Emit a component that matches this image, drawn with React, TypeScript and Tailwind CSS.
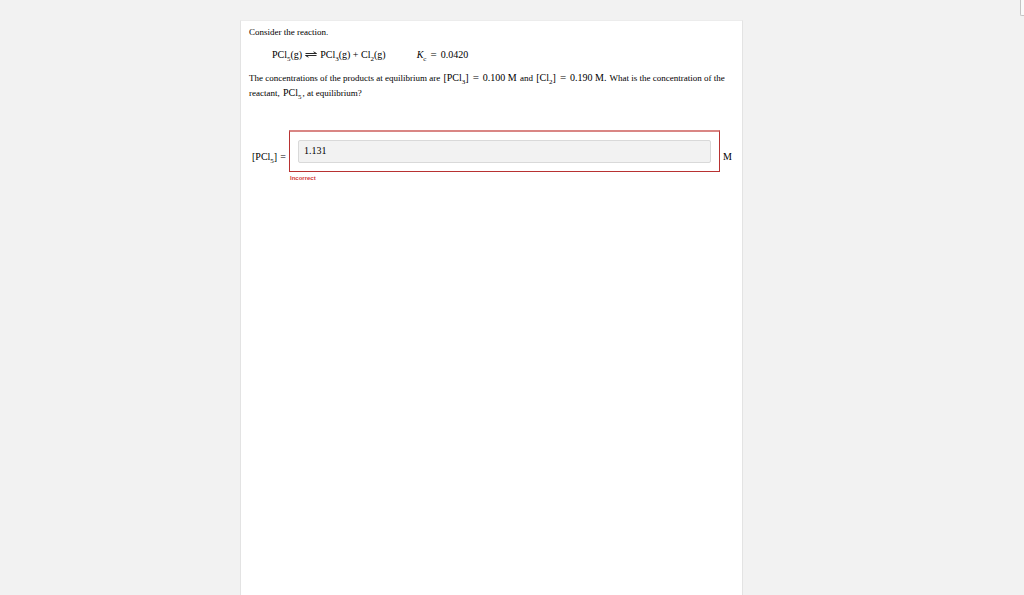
import type { ReactNode } from "react";

function Sub({ children }: { children: ReactNode }) {
  return <sub className="static align-[-3px] text-[7px] leading-[5px]">{children}</sub>;
}

function Formula({ children }: { children: ReactNode }) {
  return <span className="mx-px whitespace-nowrap text-[10px] leading-[11px]">{children}</span>;
}

function Equilibrium() {
  return (
    <svg className="mx-[3px] inline-block h-2 w-3 align-[-1px]" viewBox="0 0 12 8" fill="none" stroke="#111" strokeWidth="0.9" role="img" aria-label="is in equilibrium with">
      <path d="M0.5 2.5H11.5L8.5 0.8" />
      <path d="M11.5 4.5H0.5L3.5 6.2" />
    </svg>
  );
}

function Equals() {
  return <span className="mx-1 text-[11px] leading-none">=</span>;
}

export default function App() {
  return (
    <div className="relative flex min-h-screen bg-[#f2f2f2] pl-60 pr-[281px] pt-5 font-['Liberation_Serif',serif] text-[9px] leading-[15px] text-black">
      <div className="absolute right-0 top-0 h-4 w-1 rounded-bl-xs border-b border-l border-[#c4c4c4] bg-[#fafafa]" />
      <main className="min-w-0 flex-1 border border-b-0 border-[#e3e3e3] border-t-[#ececec] bg-white px-2 pt-1">
        <p>Consider the reaction.</p>
        <div className="mt-[7px] flex gap-[31px] whitespace-nowrap pl-[23px] text-[10px]">
          <span>
            PCl<Sub>5</Sub>(g)<Equilibrium />PCl<Sub>3</Sub>(g) + Cl<Sub>2</Sub>(g)
          </span>
          <span>
            <i>K</i><Sub>c</Sub><Equals />0.0420
          </span>
        </div>
        <p className="mt-[9px]">
          The concentrations of the products at equilibrium are <Formula>[PCl<Sub>3</Sub>]<Equals />0.100 M</Formula> and <Formula>[Cl<Sub>2</Sub>]<Equals />0.190 M.</Formula> What is the concentration of the reactant, <Formula>PCl<Sub>5</Sub></Formula>, at equilibrium?
        </p>
        <div className="mt-[29px] flex pl-[3px]">
          <label htmlFor="answer" className="w-[37px] shrink-0 whitespace-nowrap pt-[19px] text-[10px]">
            [PCl<Sub>5</Sub>]<span className="ml-[3px]">=</span>
          </label>
          <div className="min-w-0 flex-1">
            <div className="border border-t-2 border-[#b83232] border-t-[#d98684] p-2">
              <input
                id="answer"
                defaultValue="1.131"
                aria-invalid="true"
                aria-describedby="answer-status"
                className="block h-[23px] w-full rounded-xs border border-[#d9d9d9] bg-[#f2f2f2] px-[5px] pb-[2px] text-[10px] outline-none"
              />
            </div>
            <p id="answer-status" className="pl-px pt-px font-['Liberation_Sans',sans-serif] text-[6px] font-bold leading-[10px] text-[#d33a3a]">
              Incorrect
            </p>
          </div>
          <span className="w-[14px] shrink-0 pl-[3px] pt-[19px] text-[10px]">M</span>
        </div>
      </main>
    </div>
  );
}
